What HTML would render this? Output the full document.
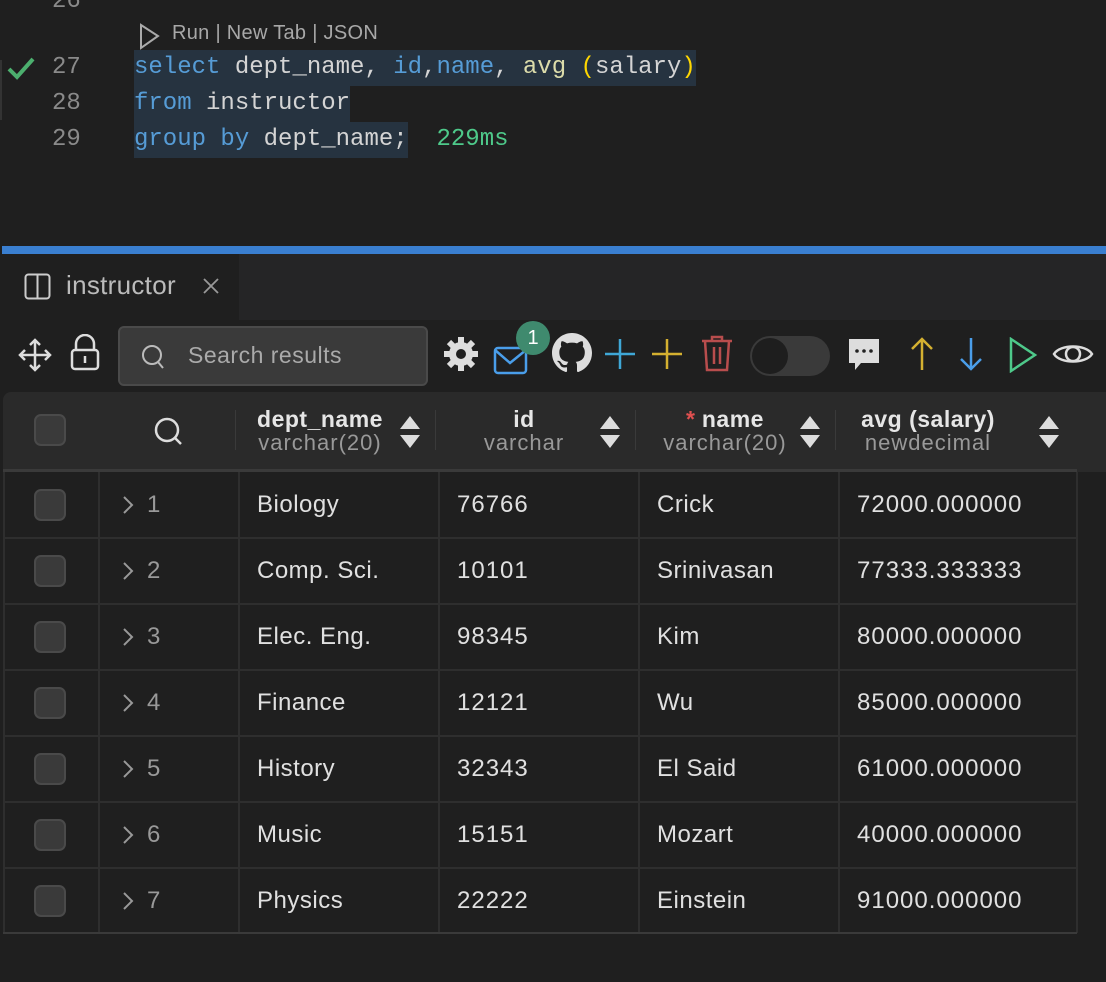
<!DOCTYPE html>
<html><head><style>
*{margin:0;padding:0;box-sizing:border-box}
body{width:1106px;height:982px;background:#1f1f1f;position:relative;overflow:hidden;font-family:"Liberation Sans",sans-serif;color:#ddd}
.a{position:absolute}
.code{font-family:"Liberation Mono",monospace;font-size:24px;line-height:36px;white-space:pre}
.ln{color:#8a8a8a;font-family:"Liberation Mono",monospace;font-size:24px;left:52px}
.kw{color:#569cd6}.fn{color:#dcdcaa}.id{color:#d4d4d4}
.sel{background:#263340;display:inline-block;height:36px}
.vl{position:absolute;top:472px;height:461px;width:2px;background:#2e2e2e}
.hl{position:absolute;left:3px;width:1074px;height:2px;background:#2e2e2e}
.cb{position:absolute;width:32px;height:32px;border-radius:7px;background:#3a3a3a;border:2px solid #4a4a4a}
.cell{position:absolute;font-size:24px;color:#e0e0e0;line-height:28px;letter-spacing:0.5px}
.num{letter-spacing:1px}
.hd{position:absolute;text-align:center;font-size:22px;line-height:24px}
.hd b{color:#e6e6e6;font-weight:bold;display:block;font-size:23px;letter-spacing:0.5px}
.hd span{color:#999;letter-spacing:1px}
</style></head><body>
<div class="a ln" style="top:-16px;line-height:36px">26</div>
<svg class="a" style="left:138px;top:22px" width="24" height="28"><path d="M3 3 L20 14 L3 26 Z" fill="none" stroke="#aaa" stroke-width="2"/></svg>
<div class="a" style="left:172px;top:22px;font-size:20px;color:#a8a8a8;letter-spacing:0.3px">Run | New Tab | JSON</div>
<svg class="a" style="left:6px;top:56px" width="30" height="26"><path d="M3 13 L11 21 L27 3" fill="none" stroke="#4caf6e" stroke-width="4"/></svg>
<div class="a ln" style="top:50px;line-height:36px">27</div>
<div class="a ln" style="top:86px;line-height:36px">28</div>
<div class="a ln" style="top:122px;line-height:36px">29</div>
<div class="a" style="left:0;top:60px;width:2px;height:60px;background:#333"></div>
<div class="a code" style="left:134px;top:50px"><span class="sel"><span class="kw">select</span> <span class="id">dept_name,</span> <span class="kw">id</span><span class="id">,</span><span class="kw">name</span><span class="id">,</span> <span class="fn">avg</span> <span style="color:#ffd700">(</span><span class="id">salary</span><span style="color:#ffd700">)</span></span></div>
<div class="a code" style="left:134px;top:86px"><span class="sel"><span class="kw">from</span> <span class="id">instructor</span></span></div>
<div class="a code" style="left:134px;top:122px"><span class="sel"><span class="kw">group</span> <span class="kw">by</span> <span class="id">dept_name;</span></span>  <span style="color:#4ec98a">229ms</span></div>
<div class="a" style="left:2px;top:246px;width:1104px;height:8px;background:#3a7fd0"></div>
<div class="a" style="left:0;top:254px;width:1106px;height:66px;background:#252526"></div>
<div class="a" style="left:0;top:254px;width:239px;height:66px;background:#1f1f1f"></div>
<svg class="a" style="left:24px;top:273px" width="28" height="28"><rect x="1.5" y="1.5" width="24" height="24" rx="3" fill="none" stroke="#ccc" stroke-width="2"/><line x1="13.5" y1="2" x2="13.5" y2="26" stroke="#ccc" stroke-width="2"/></svg>
<div class="a" style="left:66px;top:270px;font-size:26px;color:#bbb;letter-spacing:0.3px">instructor</div>
<svg class="a" style="left:202px;top:277px" width="18" height="18"><path d="M2 2L16 16M16 2L2 16" stroke="#999" stroke-width="1.8"/></svg>
<svg class="a" style="left:17px;top:337px" width="36" height="36" fill="none" stroke="#ddd" stroke-width="2.5"><path d="M18 3V33M3 18H33M13 8L18 3L23 8M13 28L18 33L23 28M8 13L3 18L8 23M28 13L33 18L28 23"/></svg>
<svg class="a" style="left:68px;top:334px" width="34" height="38" fill="none" stroke="#ddd" stroke-width="2.5"><path d="M8 16V10a9 9 0 0 1 18 0v6"/><rect x="4" y="16" width="26" height="19" rx="3"/><line x1="17" y1="22" x2="17" y2="29"/></svg>
<div class="a" style="left:118px;top:326px;width:310px;height:60px;background:#3a3a3a;border:2px solid #4a4a4a;border-radius:6px"></div>
<svg class="a" style="left:140px;top:343px" width="28" height="30" fill="none" stroke="#bbb" stroke-width="2"><circle cx="12" cy="12" r="9"/><path d="M18 19L23 25"/></svg>
<div class="a" style="left:188px;top:342px;font-size:23px;color:#aaa;letter-spacing:0.5px">Search results</div>
<svg class="a" style="left:443px;top:336px" width="36" height="36"><g fill="#ddd"><circle cx="18" cy="18" r="12"/><rect x="15" y="1" width="6" height="34"/><rect x="1" y="15" width="34" height="6"/><rect x="15" y="1" width="6" height="34" transform="rotate(45 18 18)"/><rect x="15" y="1" width="6" height="34" transform="rotate(-45 18 18)"/></g><circle cx="18" cy="18" r="5" fill="#1f1f1f"/></svg>
<svg class="a" style="left:493px;top:346px" width="36" height="30" fill="none" stroke="#4a9eea" stroke-width="2.5"><rect x="2" y="2" width="31" height="25" rx="3"/><path d="M2 4L17 17L33 4"/></svg>
<div class="a" style="left:516px;top:321px;width:34px;height:34px;border-radius:17px;background:#3f8a6e;color:#fff;font-size:20px;text-align:center;line-height:34px">1</div>
<svg class="a" style="left:552px;top:333px" width="40" height="40" viewBox="0 0 16 16"><path fill="#ddd" d="M8 0C3.58 0 0 3.58 0 8c0 3.54 2.29 6.530 5.470 7.590.4.07.55-.17.55-.38 0-.19-.01-.82-.01-1.49-2.01.37-2.53-.49-2.69-.94-.09-.23-.48-.94-.82-1.13-.28-.15-.68-.52-.01-.53.63-.01 1.08.58 1.23.82.72 1.21 1.87.87 2.330.66.07-.52.28-.87.51-1.07-1.78-.2-3.640-.89-3.640-3.950 0-.87.31-1.59.82-2.150-.08-.2-.36-1.02.08-2.12 0 0 .67-.21 2.2.82.64-.18 1.32-.27 2-.27.68 0 1.36.09 2 .27 1.53-1.04 2.2-.82 2.2-.82.44 1.1.16 1.92.08 2.12.51.56.82 1.27.82 2.15 0 3.07-1.87 3.75-3.65 3.95.29.25.54.73.54 1.48 0 1.07-.01 1.93-.01 2.2 0 .21.15.46.55.38A8.013 8.013 0 0016 8c0-4.42-3.58-8-8-8z"/></svg>
<svg class="a" style="left:603px;top:337px" width="34" height="34" stroke="#3fa7d6" stroke-width="2.5"><path d="M17 2V32M2 17H32"/></svg>
<svg class="a" style="left:650px;top:337px" width="34" height="34" stroke="#d4b030" stroke-width="2.5"><path d="M17 2V32M2 17H32"/></svg>
<svg class="a" style="left:699px;top:334px" width="36" height="38" fill="none" stroke="#b84d4d" stroke-width="2.5"><path d="M3 7H33M13 7V3H23V7M6 7L8 36H28L30 7M15 13V30M21 13V30"/></svg>
<div class="a" style="left:750px;top:336px;width:80px;height:40px;border-radius:20px;background:#3a3a3a"></div>
<div class="a" style="left:752px;top:338px;width:36px;height:36px;border-radius:18px;background:#1e1e1e"></div>
<svg class="a" style="left:847px;top:337px" width="34" height="36"><path d="M2 2H32V26H14L8 33V26H2Z" fill="#ddd"/><circle cx="10" cy="14" r="1.8" fill="#222"/><circle cx="17" cy="14" r="1.8" fill="#222"/><circle cx="24" cy="14" r="1.8" fill="#222"/></svg>
<svg class="a" style="left:908px;top:336px" width="28" height="36" fill="none" stroke="#d4b030" stroke-width="2.5"><path d="M14 34V3M4 13L14 3L24 13"/></svg>
<svg class="a" style="left:957px;top:336px" width="28" height="36" fill="none" stroke="#4a9eea" stroke-width="2.5"><path d="M14 2V33M4 23L14 33L24 23"/></svg>
<svg class="a" style="left:1008px;top:337px" width="30" height="36" fill="none" stroke="#4ec98a" stroke-width="2.5"><path d="M3 2L27 18L3 34Z"/></svg>
<svg class="a" style="left:1052px;top:340px" width="42" height="28" fill="none" stroke="#ddd" stroke-width="2.5"><path d="M2 14C8 4 34 4 40 14C34 24 8 24 2 14Z"/><circle cx="21" cy="14" r="7"/></svg>
<div class="a" style="left:3px;top:392px;width:1103px;height:80px;background:#2a2a2a;border-radius:8px 0 0 0"></div>
<div class="a" style="left:3px;top:469px;width:1074px;height:3px;background:#3a3a3a"></div>
<div class="cb" style="left:34px;top:414px"></div>
<svg class="a" style="left:153px;top:416px" width="32" height="32" fill="none" stroke="#ddd" stroke-width="2.5"><circle cx="14" cy="14" r="11"/><path d="M22 22L28 28"/></svg>
<div class="hd" style="left:240px;top:407px;width:160px"><b>dept_name</b><span>varchar(20)</span></div>
<div class="hd" style="left:440px;top:407px;width:168px"><b>id</b><span>varchar</span></div>
<div class="hd" style="left:640px;top:407px;width:170px"><b><span style="color:#e05050;letter-spacing:0">*</span> name</b><span>varchar(20)</span></div>
<div class="hd" style="left:840px;top:407px;width:176px"><b>avg (salary)</b><span>newdecimal</span></div>
<svg class="a" style="left:399px;top:415px" width="24" height="34" fill="#ddd"><path d="M1 14L11 1L21 14Z M1 20H21L11 33Z"/></svg>
<svg class="a" style="left:599px;top:415px" width="24" height="34" fill="#ddd"><path d="M1 14L11 1L21 14Z M1 20H21L11 33Z"/></svg>
<svg class="a" style="left:799px;top:415px" width="24" height="34" fill="#ddd"><path d="M1 14L11 1L21 14Z M1 20H21L11 33Z"/></svg>
<svg class="a" style="left:1038px;top:415px" width="24" height="34" fill="#ddd"><path d="M1 14L11 1L21 14Z M1 20H21L11 33Z"/></svg>
<div class="a" style="left:235px;top:410px;width:1px;height:40px;background:#3a3a3a"></div>
<div class="a" style="left:435px;top:410px;width:1px;height:40px;background:#3a3a3a"></div>
<div class="a" style="left:635px;top:410px;width:1px;height:40px;background:#3a3a3a"></div>
<div class="a" style="left:835px;top:410px;width:1px;height:40px;background:#3a3a3a"></div>
<div class="vl" style="left:3px"></div><div class="vl" style="left:98px"></div><div class="vl" style="left:238px"></div><div class="vl" style="left:438px"></div><div class="vl" style="left:638px"></div><div class="vl" style="left:838px"></div><div class="vl" style="left:1076px"></div>
<div class="hl" style="top:537px"></div><div class="hl" style="top:603px"></div><div class="hl" style="top:669px"></div><div class="hl" style="top:735px"></div><div class="hl" style="top:801px"></div><div class="hl" style="top:867px"></div><div class="hl" style="top:932px;background:#3a3a3a"></div>
<div id="rows"></div>
<script>
const d=[["Biology","76766","Crick","72000.000000"],["Comp. Sci.","10101","Srinivasan","77333.333333"],["Elec. Eng.","98345","Kim","80000.000000"],["Finance","12121","Wu","85000.000000"],["History","32343","El Said","61000.000000"],["Music","15151","Mozart","40000.000000"],["Physics","22222","Einstein","91000.000000"]];
let h="";d.forEach((r,i)=>{const y=505+66*i;
h+=`<div class="cb" style="left:34px;top:${y-16}px"></div>`;
h+=`<svg class="a" style="left:122px;top:${y-10}px" width="12" height="20" fill="none" stroke="#999" stroke-width="2"><path d="M2 2L10 10L2 18"/></svg>`;
h+=`<div class="cell" style="left:147px;top:${y-14}px;color:#999">${i+1}</div>`;
[257,457,657,857].forEach((x,j)=>h+=`<div class="cell${j==1||j==3?' num':''}" style="left:${x}px;top:${y-14}px">${r[j]}</div>`);});
document.getElementById("rows").innerHTML=h;
</script>
</body></html>
